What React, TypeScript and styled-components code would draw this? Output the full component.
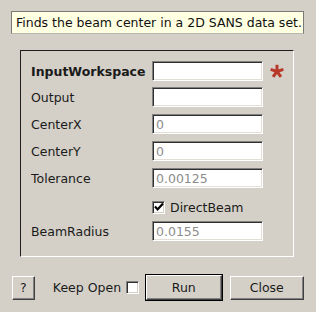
import React from 'react';
import styled, { createGlobalStyle } from 'styled-components';

const GlobalStyle = createGlobalStyle`
  html, body {
    margin: 0;
    padding: 0;
    background: #d4d0c8;
  }
  body {
    font-family: 'DejaVu Sans', 'Liberation Sans', sans-serif;
    font-size: 12.5px;
    color: #1a1a1a;
  }
`;

const Dialog = styled.div`
  width: 316px;
  height: 312px;
  box-sizing: border-box;
  padding: 11px 12px 0 11px;
  background: #d4d0c8;
  display: flex;
  flex-direction: column;
`;

const Tooltip = styled.div`
  width: 293px;
  height: 23px;
  box-sizing: border-box;
  background: #ffffe1;
  border: 1px solid #7a7a7a;
  border-bottom-color: #b8b8b0;
  display: flex;
  align-items: center;
  padding-left: 4px;
  font-size: 12.5px;
  color: #111;
  white-space: nowrap;
`;

const GroupBox = styled.div`
  margin: 16px 0 0 9px;
  width: 274px;
  height: 207px;
  box-sizing: border-box;
  border-top: 1px solid #1e1e1e;
  border-left: 1px solid #1e1e1e;
  border-right: 1px solid #ffffff;
  border-bottom: 1px solid #ffffff;
  padding: 10px 0 0 10px;
  display: grid;
  grid-template-columns: 121px 111px auto;
  grid-template-rows: 26px 27px 27px 27px 27px 26px 20px;
  align-items: start;
`;

const Label = styled.div<{ $bold?: boolean }>`
  height: 20px;
  display: flex;
  align-items: center;
  font-weight: ${p => (p.$bold ? 'bold' : 'normal')};
  white-space: nowrap;
`;

const Field = styled.div`
  width: 111px;
  height: 20px;
  box-sizing: border-box;
  background: #ffffff;
  border-top: 1px solid #808080;
  border-left: 1px solid #808080;
  border-right: 1px solid #ffffff;
  border-bottom: 1px solid #ffffff;
  box-shadow: inset 1px 1px 0 #303030, inset -1px -1px 0 #e2dfd8;
  display: flex;
  align-items: center;
  padding-left: 3px;
  color: #8c8c8c;
`;

const Required = styled.div`
  height: 20px;
  display: flex;
  align-items: center;
  margin-left: 7px;
`;

const CheckRow = styled.div`
  grid-column: 2 / 4;
  height: 20px;
  display: flex;
  align-items: center;
  gap: 5px;
  padding-top: 2px;
`;

const CheckBox = styled.span`
  width: 13px;
  height: 13px;
  box-sizing: border-box;
  background: #ffffff;
  border-top: 1px solid #808080;
  border-left: 1px solid #808080;
  border-right: 1px solid #ffffff;
  border-bottom: 1px solid #ffffff;
  box-shadow: inset 1px 1px 0 #303030, inset -1px -1px 0 #d4d0c8;
  display: inline-flex;
  align-items: center;
  justify-content: center;
  flex-shrink: 0;
`;

const Footer = styled.div`
  margin-top: 18px;
  display: flex;
  align-items: center;
`;

const Button = styled.button<{ $w: number; $default?: boolean; $ml: number }>`
  width: ${p => p.$w}px;
  height: ${p => (p.$default ? 25 : 24)}px;
  margin-left: ${p => p.$ml}px;
  box-sizing: border-box;
  font-family: 'DejaVu Sans', 'Liberation Sans', sans-serif;
  font-size: 12.5px;
  color: #1a1a1a;
  background: #d4d0c8;
  padding: 0;
  border-top: 1px solid #ffffff;
  border-left: 1px solid #ffffff;
  border-right: 1px solid #404040;
  border-bottom: 1px solid #404040;
  box-shadow: inset -1px -1px 0 #808080;
  outline: ${p => (p.$default ? '1px solid #000' : 'none')};
  outline-offset: 0;
  cursor: default;
`;

const KeepOpen = styled.label`
  margin-left: 18px;
  display: flex;
  align-items: center;
  gap: 5px;
  white-space: nowrap;
`;

const Asterisk = () => (
  <svg width="14" height="14" viewBox="0 0 14 14">
    <g stroke="#b8382a" strokeWidth="3" strokeLinecap="butt">
      {[0, 72, 144, 216, 288].map(a => (
        <line key={a} x1="7" y1="7.5" x2="7" y2="0.8" transform={`rotate(${a} 7 7.5)`} />
      ))}
    </g>
  </svg>
);

const Check = () => (
  <svg width="10" height="10" viewBox="0 0 10 10">
    <polyline points="1,4.5 3.6,7.4 9,1.4" fill="none" stroke="#000" strokeWidth="2.2" />
  </svg>
);

const rows: { label: string; value: string; bold?: boolean; required?: boolean }[] = [
  { label: 'InputWorkspace', value: '', bold: true, required: true },
  { label: 'Output', value: '' },
  { label: 'CenterX', value: '0' },
  { label: 'CenterY', value: '0' },
  { label: 'Tolerance', value: '0.00125' },
];

export default function App() {
  return (
    <>
      <GlobalStyle />
      <Dialog>
        <Tooltip>Finds the beam center in a 2D SANS data set.</Tooltip>
        <GroupBox>
          {rows.map(r => (
            <React.Fragment key={r.label}>
              <Label $bold={r.bold}>{r.label}</Label>
              <Field>{r.value}</Field>
              {r.required ? (
                <Required>
                  <Asterisk />
                </Required>
              ) : (
                <div />
              )}
            </React.Fragment>
          ))}
          <div />
          <CheckRow>
            <CheckBox>
              <Check />
            </CheckBox>
            DirectBeam
          </CheckRow>
          <Label>BeamRadius</Label>
          <Field>0.0155</Field>
          <div />
        </GroupBox>
        <Footer>
          <Button $w={23} $ml={1}>?</Button>
          <KeepOpen>
            Keep Open
            <CheckBox />
          </KeepOpen>
          <Button $w={76} $ml={7} $default>Run</Button>
          <Button $w={75} $ml={8}>Close</Button>
        </Footer>
      </Dialog>
    </>
  );
}
